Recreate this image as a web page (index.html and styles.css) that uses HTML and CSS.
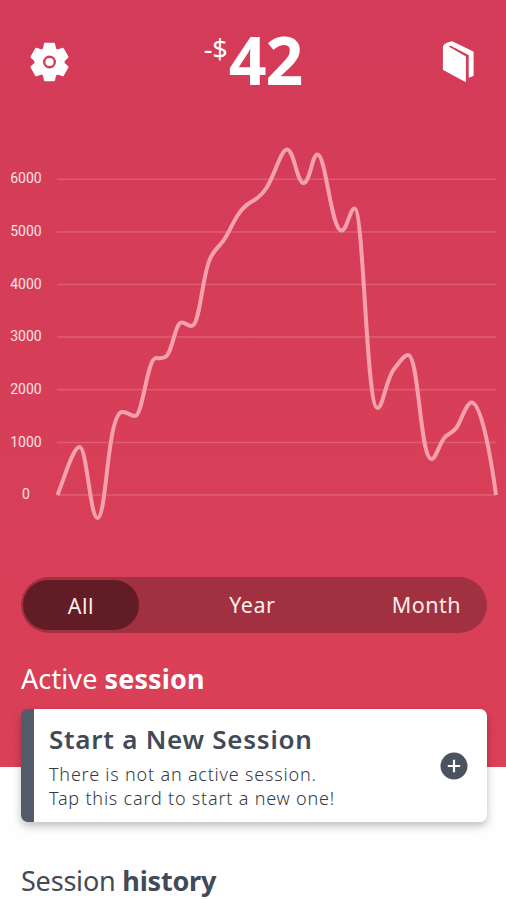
FILE: index.html
```html
<!DOCTYPE html>
<html lang="en">
<head>
    <meta charset="UTF-8">
    <meta name="viewport" content="width=device-width, initial-scale=1.0">
    <title>Sessions</title>
    <link rel="stylesheet" href="styles.css">
</head>
<body>
    <div class="app">
        <header class="header">
            <svg class="icon-gear" width="40" height="40" viewBox="-19.5 -20 40 40">
                <path fill="#fff" stroke="#fff" stroke-width="2" stroke-linejoin="round" d="M-4.500-18.200H4.500L5.600-13L8.300-11.500L13.400-13.200L18-5L14.200-1.400V1.400L18 5L13.400 13.200L8.300 11.500L5.600 13L4.500 18.200H-4.500L-5.600 13L-8.300 11.500L-13.400 13.200L-18 5L-14.200 1.400V-1.400L-18-5L-13.400-13.200L-8.300-11.500L-5.600-13Z"/>
                <circle cx="0" cy="0" r="5.300" fill="#fff" stroke="#d43c58" stroke-width="2.400"/>
            </svg>
            <div class="balance"><span class="currency">-$</span><span class="amount">42</span></div>
            <svg class="icon-book" width="34" height="42" viewBox="0 0 34 42">
                <path fill="#fff" stroke="#fff" stroke-width="1.200" stroke-linejoin="round" d="M2.500 7Q2.500 4 5.500 2.600L11 .8 32 11V34.500L28.300 36V13.800L9.500 3.900 6.500 5.500 24.300 15.800V40.300L2.500 28.400z"/>
            </svg>
        </header>

        <svg class="chart" width="506" height="410" viewBox="0 130 506 410">
            <g class="grid">
                <path d="M57 179.300H496M57 231.900H496M57 284.500H496M57 337.100H496M57 389.800H496M57 442.400H496M57 495H496"/>
            </g>
            <g class="labels">
                <text x="26" y="183.300">6000</text>
                <text x="26" y="236">5000</text>
                <text x="26" y="288.600">4000</text>
                <text x="26" y="341.200">3000</text>
                <text x="26" y="393.900">2000</text>
                <text x="26" y="446.500">1000</text>
                <text x="26" y="499">0</text>
            </g>
            <path class="line" d="M57.500 495C64 479 73 447 79.500 447C87 447 90 518 97.500 518C107 518 107 412 122.500 412C128 412 130 416 135 416C143 416 147 358 156 358C160 358 161 359 165 357C172 355 175 322.500 181.500 322.500C186 322.500 187 326 191.500 326C200 326 202 276 210 259C215 247 220 248 227 235C233 224 238 211 248 204C253 200 259 200 267 187C275 174 281 149.500 287 149.500C294 149.500 297 183 303.500 183C310 183 312 154.500 317.500 154.500C326 154.500 331 230.500 341.500 230.500C347 230.500 350 208.500 354.500 208.500C364 208.500 366 408 377.500 408C383 408 386 379 394 369C399 363 404 355 408 355C419 355 420 459 431.500 459C436 459 439 444 445 437C449 433 452 434 457 427C462 418 467 402.500 471.500 402.500C480 402.500 489 444 496 495"/>
        </svg>

        <div class="tabs">
            <div class="tab active">All</div>
            <div class="tab">Year</div>
            <div class="tab">Month</div>
        </div>

        <h2 class="title">Active <b>session</b></h2>
        <div class="card">
            <div class="card-text">
                <div class="card-title">Start a New Session</div>
                <div class="card-line">There is not an active session.</div>
                <div class="card-line">Tap this card to start a new one!</div>
            </div>
            <svg class="icon-plus" width="28" height="28" viewBox="0 0 28 28">
                <circle cx="14" cy="14" r="13.500" fill="#4b535e"/>
                <path d="M14 7.800V20.200M7.800 14H20.200" stroke="#fff" stroke-width="2.200"/>
            </svg>
        </div>
        <h2 class="title title-history">Session <b>history</b></h2>
    </div>
</body>
</html>
```
FILE: styles.css
```css
* {
    box-sizing: border-box;
}

body {
    margin: 0;
    font-family: "Noto Sans", "Open Sans", sans-serif;
    background-color: #fefefe;
    color: #424a57;
}

.app {
    width: 506px;
    height: 900px;
    overflow: hidden;
    background: linear-gradient(#d33b58, #da4057) no-repeat;
    background-size: 100% 767px;
}

.header {
    height: 130px;
    padding: 0 31px 0 30px;
    display: flex;
    justify-content: space-between;
    align-items: flex-start;
    color: #fff;
}

.icon-gear {
    margin-top: 42px;
}

.icon-book {
    margin-top: 41px;
}

.balance {
    display: flex;
    align-items: flex-start;
    margin: 17px 5px 0 0;
    line-height: 84px;
}

.currency {
    margin-right: 1px;
    font-size: 27px;
    line-height: 64px;
    letter-spacing: 0;
}

.amount {
    font-size: 66px;
    font-weight: bold;
    letter-spacing: -1px;
}

.chart {
    display: block;
}

.grid path {
    stroke: #fff;
    stroke-opacity: 0.17;
    stroke-width: 1.5;
}

.labels text {
    font-family: Roboto, sans-serif;
    font-size: 14px;
    fill: #ffe3e6;
    text-anchor: middle;
}

.line {
    fill: none;
    stroke: #f5a0ad;
    stroke-width: 4;
    stroke-linejoin: round;
}

.tabs {
    width: 466px;
    height: 56px;
    margin: 37px 0 0 21px;
    padding: 3px 26px 3px 2px;
    border-radius: 28px;
    background-color: #a13040;
    display: flex;
    justify-content: space-between;
    align-items: center;
}

.tab {
    color: #ffedea;
    font-size: 21.5px;
    line-height: 52px;
    letter-spacing: 0.5px;
}

.tab.active {
    width: 116px;
    height: 50px;
    margin-right: -26px;
    border-radius: 25px;
    background-color: #611c26;
    text-align: center;
}

.title {
    margin: 26px 0 0 21px;
    font-size: 27px;
    font-weight: normal;
    line-height: 40px;
    letter-spacing: 0.1px;
    color: #fff;
}

.card {
    width: 466px;
    height: 113px;
    margin: 10px 0 0 21px;
    padding: 0 19px 0 15px;
    border-left: 13px solid #535c66;
    border-radius: 7px;
    background-color: #fff;
    box-shadow: 0 4px 8px rgba(0, 0, 0, 0.25);
    display: flex;
    justify-content: space-between;
    align-items: center;
}

.card-title {
    margin-bottom: 5px;
    font-size: 26px;
    font-weight: 600;
    line-height: 37px;
    letter-spacing: 0.75px;
}

.card-line {
    font-size: 18px;
    font-weight: 300;
    line-height: 23.5px;
    letter-spacing: 0.8px;
    color: #343b46;
}

.title-history {
    margin-top: 39px;
    letter-spacing: -0.2px;
    color: #424a57;
}
```
